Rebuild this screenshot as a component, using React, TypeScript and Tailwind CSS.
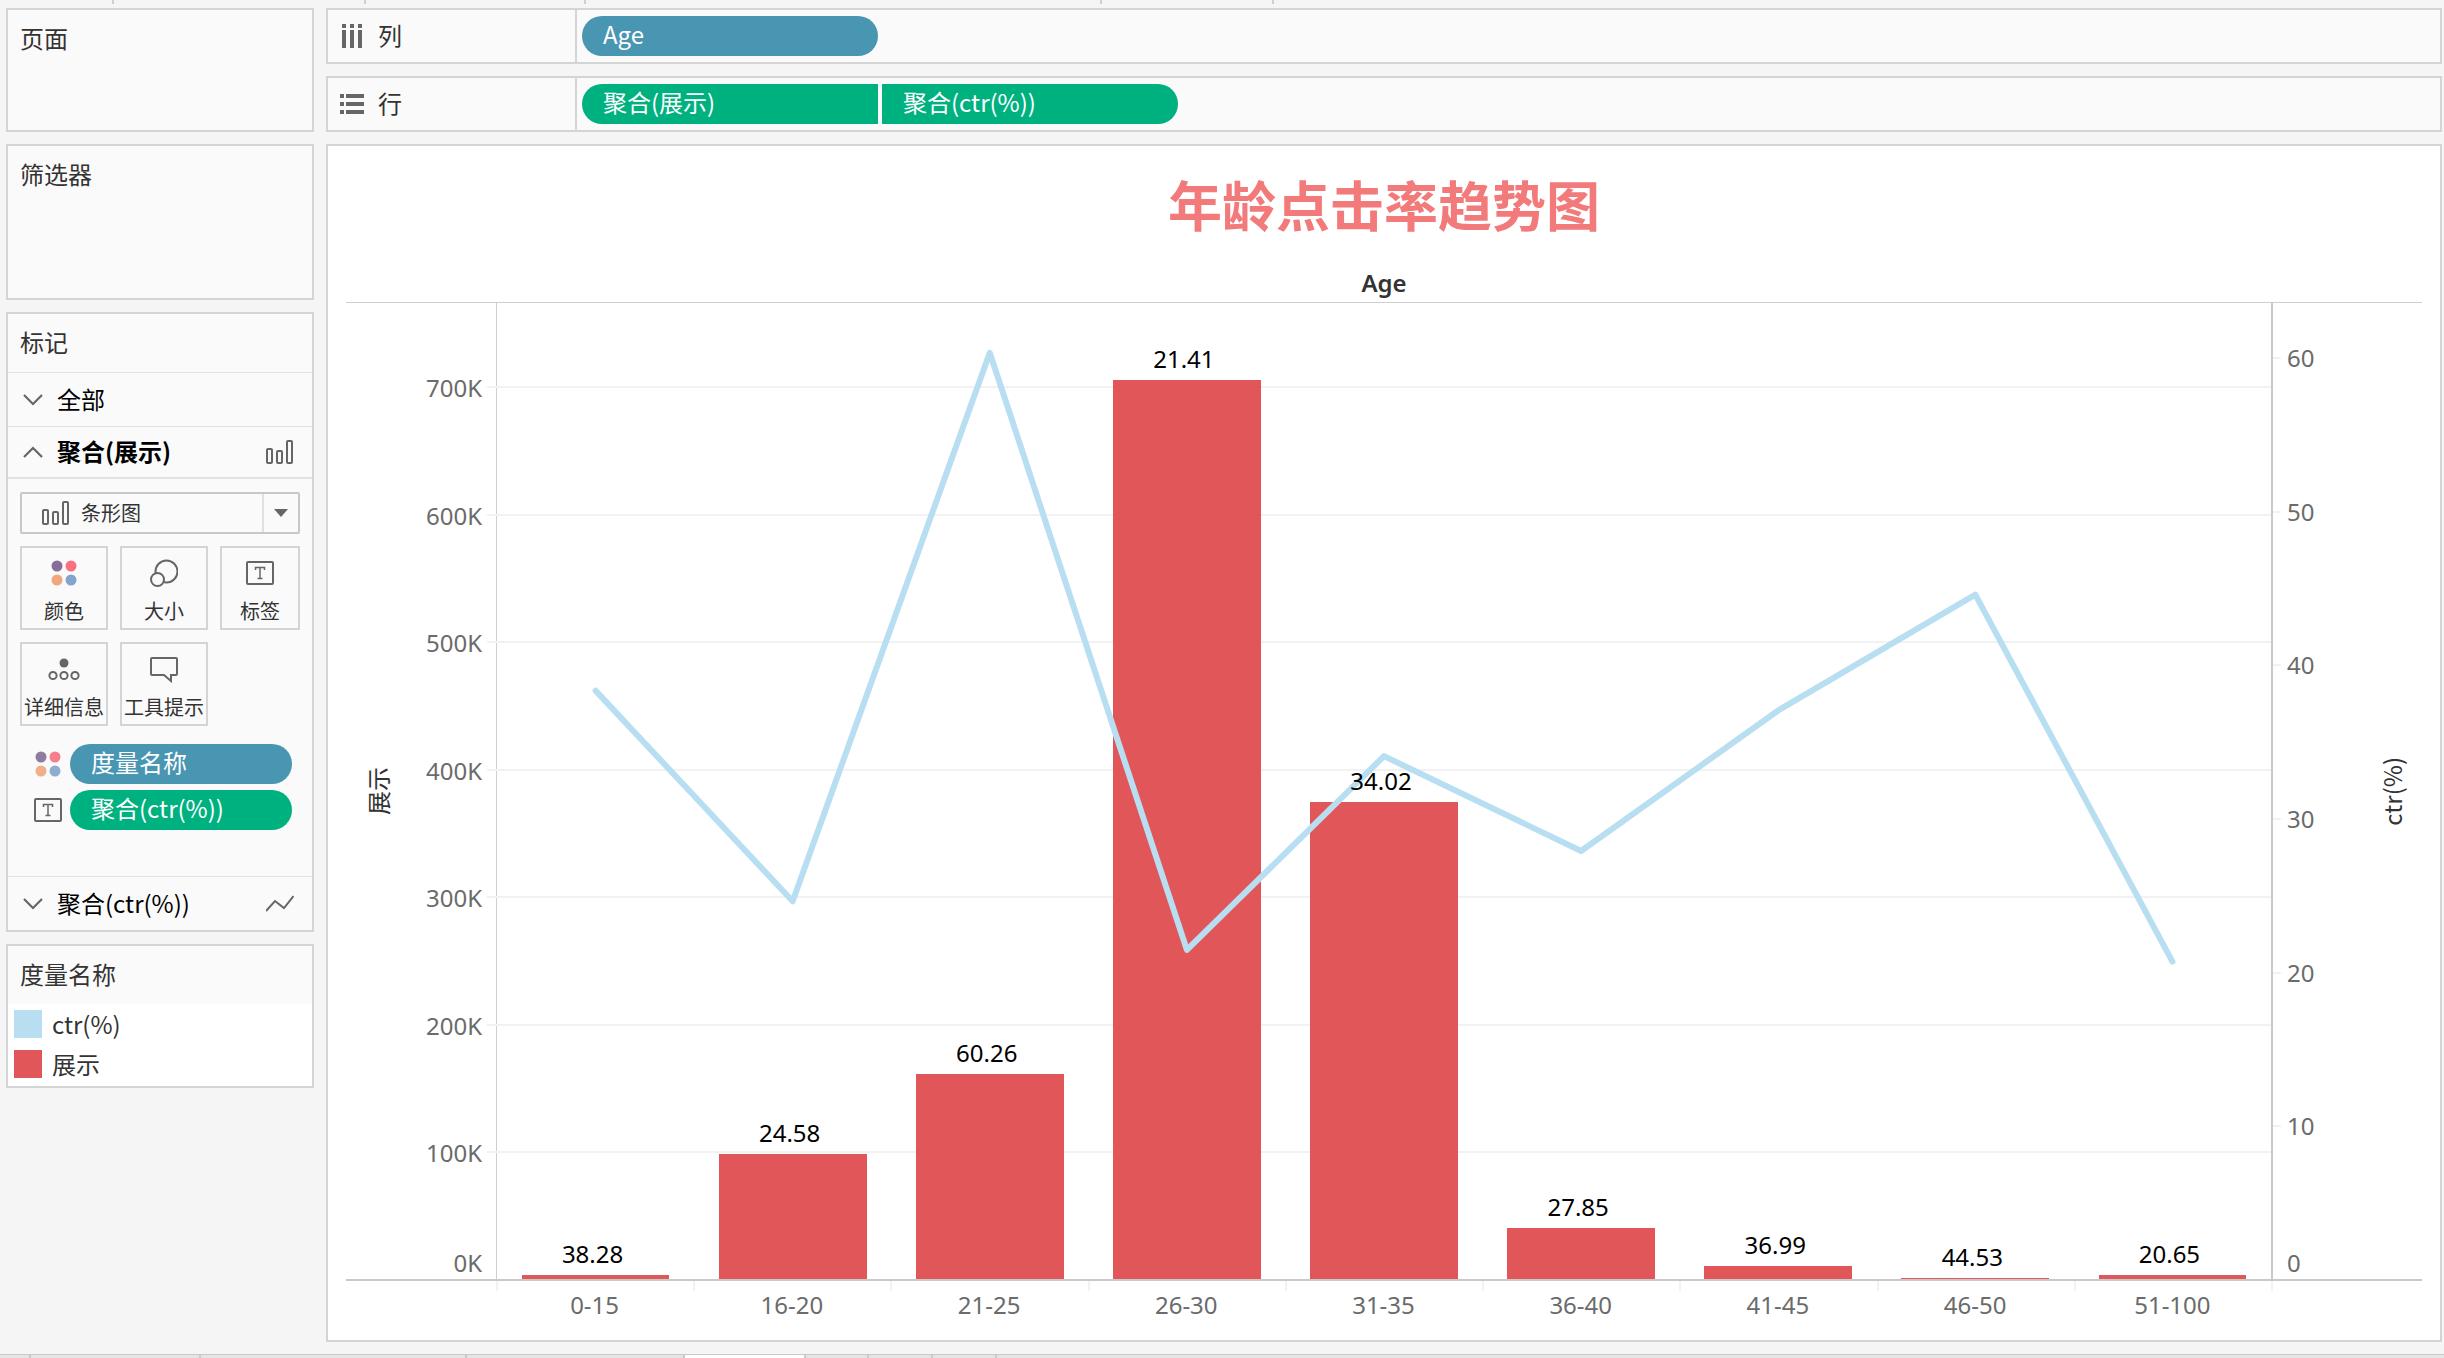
import type { ReactNode } from 'react';

const PANEL = 'border-2 border-[#d4d4d4] bg-[#fafafa]';

const BLUE_PILL = 'bg-[#4996b2]';
const GREEN_PILL = 'bg-[#00b180]';

const DATA = [
  { age: '0-15', shows: 3, ctr: 38.28 },
  { age: '16-20', shows: 98, ctr: 24.58 },
  { age: '21-25', shows: 161, ctr: 60.26 },
  { age: '26-30', shows: 705, ctr: 21.41 },
  { age: '31-35', shows: 374, ctr: 34.02 },
  { age: '36-40', shows: 40, ctr: 27.85 },
  { age: '41-45', shows: 10, ctr: 36.99 },
  { age: '46-50', shows: 1, ctr: 44.53 },
  { age: '51-100', shows: 3, ctr: 20.65 },
];

const SHOWS_MAX = 765;
const CTR_MAX = 63.5;
const SHOWS_TICKS = [700, 600, 500, 400, 300, 200, 100];
const CTR_TICKS = [60, 50, 40, 30, 20, 10];

const pct = (value: number, max: number) => `${(value / max) * 100}%`;

function Chevron({ up = false }: { up?: boolean }) {
  return (
    <svg className="h-3 w-5 shrink-0" viewBox="0 0 20 12" fill="none" stroke="#666" strokeWidth="2.2" aria-hidden="true">
      <path d={up ? 'M1 11 10 2l9 9' : 'M1 1l9 9 9-9'} />
    </svg>
  );
}

function BarsIcon() {
  return (
    <svg className="h-6 w-7 shrink-0" viewBox="0 0 28 24" fill="none" stroke="#666" strokeWidth="2" aria-hidden="true">
      <rect x="1" y="9" width="5" height="14" rx="1" />
      <rect x="11" y="11" width="5" height="12" rx="1" />
      <rect x="21" y="1" width="5" height="22" rx="1" />
    </svg>
  );
}

function LineIcon() {
  return (
    <svg className="h-6 w-7 shrink-0" viewBox="0 0 28 24" fill="none" stroke="#666" strokeWidth="2" aria-hidden="true">
      <path d="M0 19 9 9l9 7L27.500 4" />
    </svg>
  );
}

function ColorIcon() {
  return (
    <svg className="size-7 shrink-0" viewBox="0 0 28 28" aria-hidden="true">
      <circle cx="7" cy="7" r="5.500" fill="#856e98" />
      <circle cx="21" cy="7" r="5.500" fill="#f97180" />
      <circle cx="7" cy="21" r="5.500" fill="#f2a67c" />
      <circle cx="21" cy="21" r="5.500" fill="#82a5cb" />
    </svg>
  );
}

function SizeIcon() {
  return (
    <svg className="size-7 shrink-0" viewBox="0 0 28 28" fill="#fafafa" stroke="#666" strokeWidth="2" aria-hidden="true">
      <circle cx="16.500" cy="12.500" r="11" />
      <circle cx="7.500" cy="20.500" r="6.500" />
    </svg>
  );
}

function LabelIcon() {
  return (
    <svg className="size-7 shrink-0" viewBox="0 0 28 28" fill="none" stroke="#666" strokeWidth="2" aria-hidden="true">
      <rect x="1" y="3" width="26" height="22" rx="1" />
      <path d="M9.500 11V8.500h9V11M14 8.500v11M11.500 19.500h5" strokeWidth="1.500" />
    </svg>
  );
}

function DetailIcon() {
  return (
    <svg className="h-7 w-8 shrink-0" viewBox="0 0 32 28" fill="none" stroke="#666" strokeWidth="2" aria-hidden="true">
      <circle cx="16" cy="8" r="4.500" fill="#666" stroke="none" />
      <circle cx="5" cy="20.500" r="3.600" />
      <circle cx="16" cy="20.500" r="3.600" />
      <circle cx="27" cy="20.500" r="3.600" />
    </svg>
  );
}

function TooltipIcon() {
  return (
    <svg className="size-7 shrink-0" viewBox="0 0 28 28" fill="none" stroke="#666" strokeWidth="2" aria-hidden="true">
      <path d="M2 3h24q1 0 1 1v15q0 1-1 1h-5v6l-7-6H2q-1 0-1-1V4q0-1 1-1z" />
    </svg>
  );
}

function ColumnsIcon() {
  return (
    <svg className="size-6 shrink-0" viewBox="0 0 24 24" fill="#666" aria-hidden="true">
      <path d="M2 0h4v4H2zM10 0h4v4h-4zM18 0h4v4h-4zM2 6h4v18H2zM10 6h4v18h-4zM18 6h4v18h-4z" />
    </svg>
  );
}

function RowsIcon() {
  return (
    <svg className="size-6 shrink-0" viewBox="0 0 24 24" fill="#666" aria-hidden="true">
      <path d="M0 2h4v4H0zM0 10h4v4H0zM0 18h4v4H0zM6 2h18v4H6zM6 10h18v4H6zM6 18h18v4H6z" />
    </svg>
  );
}

function Pill({ className, children }: { className: string; children: ReactNode }) {
  return (
    <button type="button" className={`h-10 pb-1 pl-[21px] text-left text-white ${className}`}>
      {children}
    </button>
  );
}

function Shelf({ icon, name, children }: { icon: ReactNode; name: string; children: ReactNode }) {
  return (
    <section className={`flex h-14 items-center ${PANEL}`}>
      <h2 className="flex h-full w-[249px] items-center gap-3.5 border-r-2 border-[#d4d4d4] pl-3">
        {icon}
        <span className="pb-0.5">{name}</span>
      </h2>
      <div className="flex gap-1 pl-[5px]">{children}</div>
    </section>
  );
}

function GroupRow({ up, bold, name, icon, className }: { up?: boolean; bold?: boolean; name: string; icon?: ReactNode; className: string }) {
  return (
    <button
      type="button"
      aria-expanded={!!up}
      className={`flex w-full items-center gap-3.5 border-t border-[#e2e2e2] pr-[18px] pl-[15px] text-black ${className}`}
    >
      <Chevron up={up} />
      <span className={bold ? 'grow pb-0.5 text-left font-bold' : 'grow pb-0.5 text-left'}>{name}</span>
      {icon}
    </button>
  );
}

function MarkButton({ icon, name }: { icon: ReactNode; name: string }) {
  return (
    <button type="button" className="flex h-[84px] flex-col items-center gap-3 border-2 border-[#d4d4d4] pt-[11px] text-xl leading-6 whitespace-nowrap">
      {icon}
      {name}
    </button>
  );
}

function Sidebar() {
  return (
    <aside className="flex w-[308px] shrink-0 flex-col gap-3">
      <section className={`h-[124px] px-3 pt-3 ${PANEL}`}>
        <h2>页面</h2>
      </section>
      <section className={`h-[156px] px-3 pt-3 ${PANEL}`}>
        <h2>筛选器</h2>
      </section>
      <section className={PANEL}>
        <h2 className="flex h-[58px] items-center px-3 pb-0.5">标记</h2>
        <GroupRow name="全部" className="h-[54px]" />
        <GroupRow up bold name="聚合(展示)" icon={<BarsIcon />} className="h-[51px]" />
        <div className="border-t-2 border-[#e2e2e2] px-3 pt-[13px]">
          <div className="relative h-[42px] rounded-xs border-2 border-[#c8c8c8] text-xl">
            <select aria-label="标记类型" className="h-full w-full appearance-none pl-[59px] outline-none" defaultValue="bar">
              <option value="bar">条形图</option>
              <option value="line">线</option>
            </select>
            <span className="pointer-events-none absolute inset-y-0 left-5 flex items-center">
              <BarsIcon />
            </span>
            <span className="pointer-events-none absolute inset-y-0 right-0 flex w-9 items-center justify-center border-l-2 border-[#e0e0e0]">
              <svg className="h-2 w-3.5" viewBox="0 0 14 8" fill="#666" aria-hidden="true">
                <path d="M0 0h14L7 8z" />
              </svg>
            </span>
          </div>
          <div className="mt-3 grid grid-cols-[88fr_88fr_80fr] gap-3">
            <MarkButton icon={<ColorIcon />} name="颜色" />
            <MarkButton icon={<SizeIcon />} name="大小" />
            <MarkButton icon={<LabelIcon />} name="标签" />
            <MarkButton icon={<DetailIcon />} name="详细信息" />
            <MarkButton icon={<TooltipIcon />} name="工具提示" />
          </div>
        </div>
        <div className="mt-[18px] mb-[46px] flex flex-col gap-1.5 pr-5 pl-[26px]">
          <div className="flex items-center gap-2">
            <span className="opacity-90">
              <ColorIcon />
            </span>
            <Pill className={`grow rounded-full ${BLUE_PILL}`}>度量名称</Pill>
          </div>
          <div className="flex items-center gap-2">
            <LabelIcon />
            <Pill className={`grow rounded-full ${GREEN_PILL}`}>聚合(ctr(%))</Pill>
          </div>
        </div>
        <GroupRow name="聚合(ctr(%))" icon={<LineIcon />} className="h-[54px]" />
      </section>
      <section className={PANEL}>
        <h2 className="flex h-[58px] items-center px-3 pb-0.5">度量名称</h2>
        <ul className="bg-white pb-0.5 pl-1.5">
          <li className="flex h-10 items-center gap-2.5">
            <span className="size-7 bg-[#b8def2]" />
            ctr(%)
          </li>
          <li className="flex h-10 items-center gap-2.5">
            <span className="size-7 bg-[#e15759]" />
            展示
          </li>
        </ul>
      </section>
    </aside>
  );
}

function Plot() {
  const points = DATA.map((d, i) => `${i * 100 + 50},${1000 - (d.ctr / CTR_MAX) * 1000}`).join(' ');
  return (
    <div className="relative grow border-r-2 border-l border-r-[#c9c9c9] border-l-[#cfcfcf]">
      {SHOWS_TICKS.map((t) => (
        <span key={t} className="absolute right-0 -left-2.5 -mb-0.5 h-0.5 bg-[#f2f2f2]" style={{ bottom: pct(t, SHOWS_MAX) }} />
      ))}
      <div className="absolute inset-0 flex">
        {DATA.map((d) => (
          <div key={d.age} className="relative flex-1">
            <div className="absolute inset-x-[12.500%] bottom-0 bg-[#e15759]" style={{ height: pct(d.shows, SHOWS_MAX) }} />
          </div>
        ))}
      </div>
      <svg className="absolute inset-0 h-full w-full overflow-visible" viewBox="0 0 900 1000" preserveAspectRatio="none" aria-hidden="true">
        <polyline
          points={points}
          fill="none"
          stroke="#b8def2"
          strokeWidth="6"
          strokeLinecap="round"
          strokeLinejoin="round"
          vectorEffect="non-scaling-stroke"
        />
      </svg>
      <div className="absolute inset-0 flex text-black">
        {DATA.map((d) => (
          <div key={d.age} className="relative flex-1">
            <span className="absolute inset-x-0 mb-[5px] pr-1.5 text-center" style={{ bottom: pct(d.shows, SHOWS_MAX) }}>
              {d.ctr.toFixed(2)}
            </span>
          </div>
        ))}
      </div>
    </div>
  );
}

function AxisTitle({ className, children }: { className: string; children: ReactNode }) {
  return (
    <div className={`absolute inset-y-0 flex items-center font-['Noto_Sans_CJK_SC',sans-serif] text-[#333] ${className}`}>
      <span className="rotate-180 whitespace-nowrap [text-orientation:sideways] [writing-mode:vertical-rl]">{children}</span>
    </div>
  );
}

function Chart() {
  return (
    <section className="flex min-h-0 grow flex-col border-2 border-[#d4d4d4] bg-white px-[18px] pb-[11px] font-['Noto_Sans','Noto_Sans_CJK_SC',sans-serif]">
      <h1 className="flex h-[120px] shrink-0 items-center justify-center text-[54px] leading-none font-bold text-[#f27a7a]">年龄点击率趋势图</h1>
      <h2 className="flex h-9 shrink-0 items-center justify-center pb-0.5 font-semibold">Age</h2>
      <div className="flex min-h-0 grow border-t border-b-2 border-t-[#cfcfcf] border-b-[#c9c9c9]">
        <div className="relative w-[150px] shrink-0 text-[#6b6b6b]">
          <AxisTitle className="left-4">展示</AxisTitle>
          {SHOWS_TICKS.map((t) => (
            <span key={t} className="absolute right-3.5 -mb-0.5 translate-y-1/2" style={{ bottom: pct(t, SHOWS_MAX) }}>
              {t}K
            </span>
          ))}
          <span className="absolute right-3.5 bottom-0">0K</span>
        </div>
        <Plot />
        <div className="relative w-[149px] shrink-0 text-[#6b6b6b]">
          {CTR_TICKS.map((t) => (
            <span key={t} className="absolute left-0 -mb-px flex translate-y-1/2 items-center gap-1.5" style={{ bottom: pct(t, CTR_MAX) }}>
              <span className="h-0.5 w-2 bg-[#f2f2f2]" />
              {t}
            </span>
          ))}
          <span className="absolute bottom-0 left-3.5">0</span>
          <AxisTitle className="right-3.5">ctr(%)</AxisTitle>
        </div>
      </div>
      <div className="flex shrink-0 pr-[149px] pl-[150px] text-[#6b6b6b]">
        {DATA.map((d) => (
          <div key={d.age} className="relative h-12 flex-1 text-center leading-[48px]">
            <span className="absolute top-0 left-0 h-2.5 w-0.5 bg-[#f2f2f2]" />
            {d.age}
          </div>
        ))}
        <span className="h-2.5 w-0.5 bg-[#f2f2f2]" />
      </div>
    </section>
  );
}

export default function App() {
  return (
    <div className="flex h-screen min-h-[1130px] flex-col bg-[#f5f5f5] font-['Noto_Sans_CJK_SC',sans-serif] text-2xl leading-8 text-[#333]">
      <div className="flex h-2 shrink-0 items-start">
        <span className="h-1 w-[114px] border-r-2 border-[#d0d0d0]" />
        <span className="h-1 w-[252px] border-r-2 border-[#d0d0d0]" />
        <span className="h-1 w-[220px] border-r-2 border-[#d0d0d0]" />
        <span className="h-1 w-[516px] border-r-2 border-[#d0d0d0]" />
        <span className="h-1 w-[172px] border-r-2 border-[#d0d0d0]" />
      </div>
      <main className="flex min-h-0 grow gap-3 pr-0.5 pl-1.5">
        <Sidebar />
        <div className="flex min-w-0 grow flex-col gap-3">
          <Shelf icon={<ColumnsIcon />} name="列">
            <Pill className={`w-[296px] rounded-full ${BLUE_PILL}`}>Age</Pill>
          </Shelf>
          <Shelf icon={<RowsIcon />} name="行">
            <Pill className={`w-[296px] rounded-l-full rounded-r-xs ${GREEN_PILL}`}>聚合(展示)</Pill>
            <Pill className={`w-[296px] rounded-l-xs rounded-r-full ${GREEN_PILL}`}>聚合(ctr(%))</Pill>
          </Shelf>
          <Chart />
        </div>
      </main>
      <footer className="mt-3 flex h-1 shrink-0 border-t border-[#c9c9c9] bg-[#e5e5e5]">
        <span className="w-[31px] border-r-2 border-[#cacaca]" />
        <span className="w-[170px] border-r-2 border-[#cacaca]" />
        <span className="w-[266px] border-r-2 border-[#cacaca]" />
        <span className="w-[218px] border-r-2 border-[#cacaca]" />
        <span className="w-[121px] border-r-2 border-[#cacaca] bg-white" />
        <span className="w-[63px] border-r-2 border-[#cacaca]" />
        <span className="w-16 border-r-2 border-[#cacaca]" />
        <span className="w-16 border-r-2 border-[#cacaca]" />
      </footer>
    </div>
  );
}
